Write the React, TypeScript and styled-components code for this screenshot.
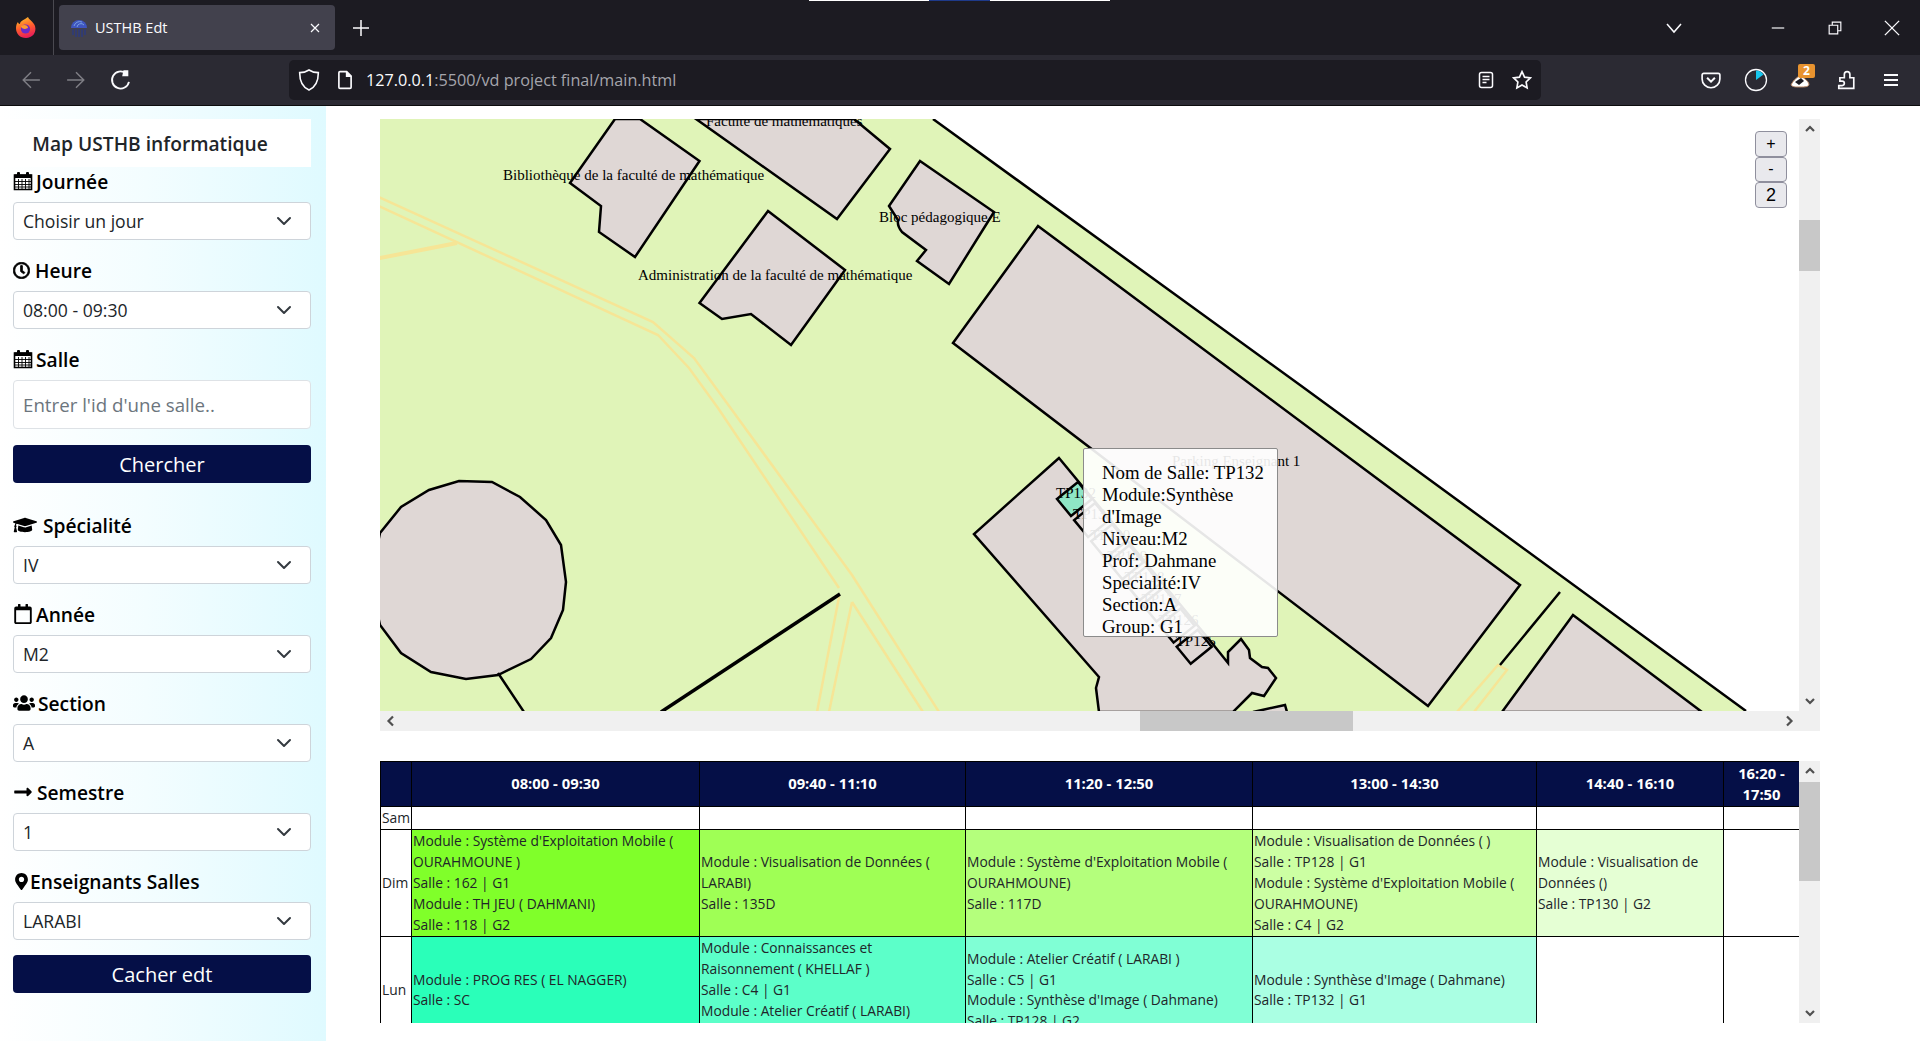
import type { ReactNode } from 'react';
import styled, { createGlobalStyle } from 'styled-components';
import {
  FaGraduationCap,
  FaLongArrowAltRight,
  FaMapMarkerAlt,
  FaRegCalendar,
  FaRegClock,
  FaUsers,
} from 'react-icons/fa';

const GlobalStyle = createGlobalStyle`
  html, body {
    margin: 0;
    padding: 0;
    height: 1041px;
    overflow: hidden;
    background: #fff;
    font-family: "Open Sans", sans-serif;
  }
  * { box-sizing: border-box; }
`;

/* ---- little drawings ---- */

function CalendarGrid() {
  return (
    <svg width="20" height="20" viewBox="0 0 20 20">
      <path d="M1.5 4h17v14.5h-17z" fill="#fff" stroke="#000" strokeWidth="1.6" />
      <path d="M1.5 3.5h17v3.5h-17z" fill="#000" />
      <path d="M5.5 8v10M9 8v10M12.5 8v10M16 8v10M2 10.5h16M2 13.5h16M2 16h16" stroke="#000" strokeWidth="0.9" />
      <rect x="4" y="1" width="3" height="5" rx="1" fill="#000" />
      <rect x="13" y="1" width="3" height="5" rx="1" fill="#000" />
    </svg>
  );
}

function FirefoxLogo() {
  return (
    <svg width="22" height="24" viewBox="0 0 22 24">
      <defs>
        <linearGradient id="fx" x1="0.3" y1="0" x2="0.6" y2="1">
          <stop offset="0" stopColor="#ffc02c" />
          <stop offset="0.5" stopColor="#ff5b2e" />
          <stop offset="1" stopColor="#e5185d" />
        </linearGradient>
      </defs>
      <path d="M13 1c1 3 5 4 7 9 2 7-3 12-9 12S1 18 1 12c0-3 1-5 2-6 0 1 1 2 2 2 0-3 4-4 8-7z" fill="url(#fx)" />
      <circle cx="10.5" cy="13" r="4.6" fill="#6a2bc9" />
      <path d="M6 10c3-2 7-1 7 2l-3 1c-2 0-4-1-4-3z" fill="#ff9a2e" />
    </svg>
  );
}

function Favicon() {
  return (
    <svg width="18" height="20" viewBox="0 0 18 20">
      <path d="M1 10a8 8 0 0 1 16 0z" fill="#3f55c0" />
      <path d="M3 11v6M6 11v8M9 11v8M12 11v8M15 11v6" stroke="#2c3a80" strokeWidth="1.4" />
      <path d="M4 8a6 6 0 0 1 8-4M7 9a4 4 0 0 1 7-2" stroke="#77a0e0" strokeWidth="1" fill="none" />
    </svg>
  );
}

const chromeStroke = { fill: 'none', stroke: '#fbfbfe', strokeWidth: 1.5 };

function Stroked({ size = 18, dim, children }: { size?: number; dim?: boolean; children: ReactNode }) {
  return (
    <svg width={size} height={size} viewBox="0 0 18 18" opacity={dim ? 0.4 : 1} {...chromeStroke}>
      {children}
    </svg>
  );
}

/* ---- map data, in page coordinates ---- */

const buildings = [
  'M615 119L570 183L601 206L599 232L635 257L699.5 161L640 119Z',
  'M696 119L837 219L890 149L854 119Z',
  'M920 161L994 212L949 284L917 261L926 250L902 232Q897 226 898 220L889 206Z',
  'M768 211L845 270L791 345L751 314L722 319L699.5 303Z',
  'M1038 226L1520 585L1428 706L953 343Z',
  'M1573 615L1502 712H1702Z',
  'M370 580L380 533L401 507L429 490L459 481L492 482L520 497L546 520L561 545L566 582L563 610L551 638L531 659L498 675L466 679L431 672L401 653L380 625Z',
  'M1059 458L974 534L1099 677L1096 688L1099 712H1233L1252 693L1264 696L1276 678L1268 668L1262 667L1250 658L1249 650L1241 639L1228 652L1228 663L1212 643Z',
];

const roads = [
  'M370 193L653 322L694 358L732 410L852 575L939 712',
  'M370 202L658 335L689 368L718 408L839 588',
  'M852 602L923 712M852 602L829 712M839 597L817 712',
  'M1457 712L1498 665L1507 670L1474 712',
];

const rooms = ['TP132', 'TP131', 'TP130', 'TP129', 'TP128', 'TP127', 'TP126', 'TP125'];

const mapLabels = [
  { text: 'Faculté de mathématiques', x: 706, y: 126 },
  { text: 'Bibliothèque de la faculté de mathématique', x: 503, y: 180 },
  { text: 'Bloc pédagogique E', x: 879, y: 222 },
  { text: 'Administration de la faculté de mathématique', x: 638, y: 280 },
  { text: 'Parking Enseignant 1', x: 1172, y: 466 },
];

function CampusMap() {
  return (
    <MapSvg viewBox="380 119 1419 592">
      <polygon points="370,119 933,119 1746,711 1746,712 370,712" fill="#e0f4b8" />
      {roads.map((d) => (
        <path key={d} d={d} fill="none" stroke="#f6e596" strokeWidth="2.5" />
      ))}
      <path d="M370 260L457 243" fill="none" stroke="#f6e596" strokeWidth="4" />
      <path d="M933 119L1300 385L1746 711" fill="none" stroke="#000" strokeWidth="2.5" />
      {buildings.map((d) => (
        <path key={d} d={d} fill="#dfd7d5" stroke="#000" strokeWidth="2.5" strokeLinejoin="miter" />
      ))}
      <path d="M1253 712L1285 705L1287 712" fill="#dfd7d5" stroke="#000" strokeWidth="2.5" />
      <path d="M498 673L524 712M1560 592L1500 665" fill="none" stroke="#000" strokeWidth="2.5" />
      <path d="M840 594L661 712" fill="none" stroke="#000" strokeWidth="3.5" />
      {rooms.map((name, i) => {
        const x = 1057 + i * 17.1;
        const y = 499 + i * 21.1;
        return (
          <g key={name}>
            <path
              d={`M${x} ${y}l21 -17l14 17l-21 17z`}
              fill={i === 0 ? '#8fe6c6' : '#dfd7d5'}
              stroke="#000"
              strokeWidth="2.5"
            />
            <MapLabel x={x - 1} y={y - 1}>{name}</MapLabel>
          </g>
        );
      })}
      {mapLabels.map((l) => (
        <MapLabel key={l.text} x={l.x} y={l.y}>{l.text}</MapLabel>
      ))}
    </MapSvg>
  );
}

/* ---- timetable data ---- */

const hours = ['08:00 - 09:30', '09:40 - 11:10', '11:20 - 12:50', '13:00 - 14:30', '14:40 - 16:10', '16:20 - 17:50'];
const colWidths = [31, 288, 266, 287, 284, 187, 76];

const days: { name: string; cells: { bg: string; lines: string[] }[] }[] = [
  { name: 'Sam', cells: [] },
  {
    name: 'Dim',
    cells: [
      { bg: '#80ff2a', lines: ["Module : Système d'Exploitation Mobile ( OURAHMOUNE )", 'Salle : 162 | G1', 'Module : TH JEU ( DAHMANI)', 'Salle : 118 | G2'] },
      { bg: '#9fff55', lines: ['Module : Visualisation de Données ( LARABI)', 'Salle : 135D'] },
      { bg: '#b4ff7c', lines: ["Module : Système d'Exploitation Mobile ( OURAHMOUNE)", 'Salle : 117D'] },
      { bg: '#ccffa3', lines: ['Module : Visualisation de Données ( )', 'Salle : TP128 | G1', "Module : Système d'Exploitation Mobile ( OURAHMOUNE)", 'Salle : C4 | G2'] },
      { bg: '#e5ffd4', lines: ['Module : Visualisation de Données ()', 'Salle : TP130 | G2'] },
    ],
  },
  {
    name: 'Lun',
    cells: [
      { bg: '#2affb9', lines: ['Module : PROG RES ( EL NAGGER)', 'Salle : SC'] },
      { bg: '#5cffc9', lines: ['Module : Connaissances et Raisonnement ( KHELLAF )', 'Salle : C4 | G1', 'Module : Atelier Créatif ( LARABI)', 'Salle : C5 | G2'] },
      { bg: '#80ffd5', lines: ['Module : Atelier Créatif ( LARABI )', 'Salle : C5 | G1', "Module : Synthèse d'Image ( Dahmane)", 'Salle : TP128 | G2'] },
      { bg: '#aaffe3', lines: ["Module : Synthèse d'Image ( Dahmane)", 'Salle : TP132 | G1'] },
    ],
  },
];

/* ---- sidebar data ---- */

const topFields = [
  { icon: <CalendarGrid />, label: 'Journée', value: 'Choisir un jour' },
  { icon: <FaRegClock size={17} stroke="currentColor" strokeWidth={24} />, label: 'Heure', value: '08:00 - 09:30', gap: 5 },
];

const bottomFields = [
  { icon: <FaGraduationCap size={24} />, label: 'Spécialité', value: 'IV', gap: 6 },
  { icon: <FaRegCalendar size={20} />, label: 'Année', value: 'M2' },
  { icon: <FaUsers size={22} />, label: 'Section', value: 'A' },
  { icon: <FaLongArrowAltRight size={20} />, label: 'Semestre', value: '1', gap: 4 },
  { icon: <FaMapMarkerAlt size={17} />, label: 'Enseignants Salles', value: 'LARABI', gap: 0 },
];

function Chevron() {
  return (
    <svg width="16" height="16" viewBox="0 0 16 16">
      <path d="M2 5l6 6 6-6" fill="none" stroke="#343a40" strokeWidth="2" strokeLinecap="round" strokeLinejoin="round" />
    </svg>
  );
}

function Field({ icon, label, value, gap }: { icon: ReactNode; label: string; value: string; gap?: number }) {
  return (
    <FieldBlock>
      <FieldLabel $gap={gap}>
        {icon}
        {label}
      </FieldLabel>
      <SelectBox>
        {value}
        <Chevron />
      </SelectBox>
    </FieldBlock>
  );
}

function Arrow({ dir }: { dir: 'up' | 'down' | 'left' | 'right' }) {
  const d = { up: 'M2 7l4-4 4 4', down: 'M2 4l4 4 4-4', left: 'M8 1.5L3.5 6 8 10.5', right: 'M4 1.5L8.5 6 4 10.5' }[dir];
  return (
    <svg width="12" height="12" viewBox="0 0 12 12">
      <path d={d} fill="none" stroke="#505050" strokeWidth="2.2" />
    </svg>
  );
}

export default function App() {
  return (
    <>
      <GlobalStyle />
      <Window>
        <TabBar>
          <LoadStrip />
          <LogoSlot>
            <FirefoxLogo />
          </LogoSlot>
          <Tab>
            <Favicon />
            <TabTitle>USTHB Edt</TabTitle>
            <Stroked size={12}>
              <path d="M3 3l12 12M15 3L3 15" strokeWidth="1.8" />
            </Stroked>
          </Tab>
          <NewTab>
            <Stroked size={18}>
              <path d="M9 1v16M1 9h16" />
            </Stroked>
          </NewTab>
          <TabSpacer />
          <ListTabs>
            <Stroked size={18}>
              <path d="M2 5l7 8 7-8" />
            </Stroked>
          </ListTabs>
          <WinButton>
            <Stroked size={14}>
              <path d="M1 9h16" />
            </Stroked>
          </WinButton>
          <WinButton>
            <Stroked size={14}>
              <path d="M1.5 5.5h11v11h-11zM5.5 5V1.5h11v11H13" />
            </Stroked>
          </WinButton>
          <WinButton>
            <Stroked size={16}>
              <path d="M1 1l16 16M17 1L1 17" />
            </Stroked>
          </WinButton>
        </TabBar>

        <NavBar>
          <NavButton>
            <Stroked size={20} dim>
              <path d="M17 9H2M9 2L2 9l7 7" strokeWidth="1.3" />
            </Stroked>
          </NavButton>
          <NavButton>
            <Stroked size={20} dim>
              <path d="M1 9h15M9 2l7 7-7 7" strokeWidth="1.3" />
            </Stroked>
          </NavButton>
          <NavButton>
            <Stroked size={22}>
              <path d="M15.5 10.5A7 7 0 1 1 13 3.5" />
              <path d="M11 1h4v5h-5z" fill="#fbfbfe" stroke="none" />
            </Stroked>
          </NavButton>
          <UrlBar>
            <UrlIcon>
              <Stroked size={24}>
                <path d="M9 1.5c2 1.3 4.5 2 7 2 0 6-1.5 10.5-7 13-5.500-2.500-7-7-7-13 2.500 0 5-.7 7-2z" strokeWidth="1.2" />
              </Stroked>
            </UrlIcon>
            <UrlIcon>
              <Stroked size={20}>
                <path d="M3.5 2.500a1 1 0 0 1 1-1h6l4 4v10a1 1 0 0 1-1 1h-9a1 1 0 0 1-1-1z" />
                <path d="M10.5 1.500v4h4" fill="#fbfbfe" />
              </Stroked>
            </UrlIcon>
            <UrlText>
              <b>127.0.0.1</b>:5500/vd project final/main.html
            </UrlText>
            <Stroked size={18}>
              <rect x="2.5" y="1.5" width="13" height="15" rx="2" />
              <path d="M5.5 5.5h7M5.5 8.5h7M5.5 11.5h4" />
            </Stroked>
            <UrlEndIcon>
              <Stroked size={20}>
                <path d="M9 1.500l2.300 4.900 5.200.7-3.800 3.700.9 5.300L9 13.500l-4.600 2.600.9-5.300L1.500 7.100l5.200-.7z" />
              </Stroked>
            </UrlEndIcon>
          </UrlBar>
          <Toolbar>
            <ToolSlot>
              <Stroked size={20}>
                <path d="M2.500 3h13a1.500 1.500 0 0 1 1.500 1.500V8a8 8 0 0 1-16 0V4.500A1.500 1.500 0 0 1 2.500 3z" />
                <path d="M5.500 7L9 10.500 12.500 7" strokeWidth="1.8" />
              </Stroked>
            </ToolSlot>
            <ToolSlot>
              <svg width="24" height="24" viewBox="0 0 24 24">
                <circle cx="12" cy="12" r="10.5" fill="none" stroke="#fbfbfe" strokeWidth="1.3" />
                <path d="M12 12V2.500a10 10 0 0 1 7.500 4z" fill="#16c6ee" />
              </svg>
            </ToolSlot>
            <ToolSlot>
              <svg width="24" height="24" viewBox="0 0 24 24">
                <path d="M2 17c3-6 6-7 9-10 3 3 8 5 9 9 0 3-4 3-9 3s-7 0-9-2z" fill="#fff" stroke="#b98563" strokeWidth="1" />
                <path d="M6 14l6-4 3 3-5 4z" fill="#1c1b22" />
              </svg>
              <ExtBadge>2</ExtBadge>
            </ToolSlot>
            <ToolSlot>
              <Stroked size={20}>
                <path d="M2.500 16.500h13.500V7h-3.500V4a2.500 2.500 0 0 0-5 0v3H3.500v3h2a2 2 0 0 1 0 4h-3z" />
              </Stroked>
            </ToolSlot>
            <ToolSlot>
              <Stroked size={18}>
                <path d="M2 4h14M2 9h14M2 14h14" strokeWidth="1.8" />
              </Stroked>
            </ToolSlot>
          </Toolbar>
        </NavBar>

        <Page>
          <Sidebar>
            <SideTitle>Map USTHB informatique</SideTitle>
            {topFields.map((f) => (
              <Field key={f.label} {...f} />
            ))}
            <FieldBlock>
              <FieldLabel>
                <CalendarGrid />
                Salle
              </FieldLabel>
              <SearchInput placeholder="Entrer l'id d'une salle.." />
            </FieldBlock>
            <PrimaryButton>Chercher</PrimaryButton>
            <FilterGroup>
              {bottomFields.map((f) => (
                <Field key={f.label} {...f} />
              ))}
            </FilterGroup>
            <PrimaryButton>Cacher edt</PrimaryButton>
          </Sidebar>

          <Main>
            <MapPanel>
              <MapRow>
                <MapViewport>
                  <CampusMap />
                  <ZoomControls>
                    <ZoomButton>+</ZoomButton>
                    <ZoomButton>-</ZoomButton>
                    <ZoomButton $large>2</ZoomButton>
                  </ZoomControls>
                  <RoomTooltip>
                    Nom de Salle: TP132
                    <br />
                    Module:Synthèse d'Image
                    <br />
                    Niveau:M2
                    <br />
                    Prof: Dahmane
                    <br />
                    Specialité:IV
                    <br />
                    Section:A
                    <br />
                    Group: G1
                  </RoomTooltip>
                </MapViewport>
                <VTrack>
                  <TrackArrow>
                    <Arrow dir="up" />
                  </TrackArrow>
                  <VThumb $top={80} $height={51} />
                  <TrackSpacer />
                  <TrackArrow>
                    <Arrow dir="down" />
                  </TrackArrow>
                </VTrack>
              </MapRow>
              <HTrack>
                <HArrow>
                  <Arrow dir="left" />
                </HArrow>
                <HThumb />
                <TrackSpacer />
                <HArrow>
                  <Arrow dir="right" />
                </HArrow>
                <TrackCorner />
              </HTrack>
            </MapPanel>

            <TablePanel>
              <TableClip>
                <Timetable>
                  <colgroup>
                    {colWidths.map((w, i) => (
                      <col key={i} style={{ width: w }} />
                    ))}
                  </colgroup>
                  <thead>
                    <tr>
                      <HeadCell />
                      {hours.map((h) => (
                        <HeadCell key={h}>{h}</HeadCell>
                      ))}
                    </tr>
                  </thead>
                  <tbody>
                    {days.map((day) => (
                      <tr key={day.name}>
                        <DayCell>{day.name}</DayCell>
                        {hours.map((h, i) => {
                          const cell = day.cells[i];
                          return (
                            <SlotCell key={h} $bg={cell?.bg}>
                              {cell?.lines.map((line) => (
                                <div key={line}>{line}</div>
                              ))}
                            </SlotCell>
                          );
                        })}
                      </tr>
                    ))}
                  </tbody>
                </Timetable>
              </TableClip>
              <VTrack>
                <TrackArrow>
                  <Arrow dir="up" />
                </TrackArrow>
                <VThumb $top={0} $height={99} />
                <TrackSpacer />
                <TrackArrow>
                  <Arrow dir="down" />
                </TrackArrow>
              </VTrack>
            </TablePanel>
          </Main>
        </Page>
      </Window>
    </>
  );
}

/* ---- browser chrome ---- */

const Window = styled.div`
  width: 1920px;
  height: 1041px;
  display: flex;
  flex-direction: column;
  overflow: hidden;
`;

const TabBar = styled.div`
  position: relative;
  flex: 0 0 55px;
  display: flex;
  align-items: center;
  background: #1c1b22;
`;

const LoadStrip = styled.div`
  position: absolute;
  top: 0;
  left: 809px;
  width: 301px;
  height: 1px;
  background: linear-gradient(90deg, #fff 0 40%, #1e3a8a 40% 60%, #fff 60%);
`;

const LogoSlot = styled.div`
  width: 54px;
  height: 55px;
  padding-right: 2px;
  display: flex;
  align-items: center;
  justify-content: center;
  border-right: 1px solid #4a4950;
`;

const Tab = styled.div`
  width: 276px;
  height: 45px;
  margin-left: 5px;
  padding: 0 14px 0 11px;
  display: flex;
  align-items: center;
  gap: 7px;
  border-radius: 4px;
  background: #42414d;
`;

const TabTitle = styled.span`
  flex: 1;
  color: #fbfbfe;
  font-size: 14.5px;
`;

const NewTab = styled.div`
  width: 52px;
  display: flex;
  justify-content: center;
`;

const TabSpacer = styled.div`
  flex: 1;
`;

const ListTabs = styled.div`
  width: 60px;
  margin-right: 45px;
  display: flex;
  justify-content: center;
`;

const WinButton = styled.div`
  width: 57px;
  display: flex;
  justify-content: center;
`;

const NavBar = styled.div`
  flex: 0 0 51px;
  display: flex;
  align-items: center;
  padding: 0 0 1px 8px;
  background: #2b2a33;
  border-bottom: 1px solid #0c0c0d;
`;

const NavButton = styled.div`
  width: 45px;
  display: flex;
  justify-content: center;
`;

const UrlBar = styled.div`
  width: 1252px;
  height: 40px;
  margin-left: 146px;
  padding: 0 9px 0 1px;
  display: flex;
  align-items: center;
  border-radius: 5px;
  background: #1c1b22;
`;

const UrlIcon = styled.div`
  width: 35px;
  display: flex;
  justify-content: center;
  margin-left: 1px;
`;

const UrlText = styled.div`
  flex: 1;
  margin-left: 4px;
  color: #a5a5ac;
  font-size: 16.2px;

  b {
    color: #fbfbfe;
    font-weight: 400;
  }
`;

const UrlEndIcon = styled.div`
  margin-left: 17px;
  display: flex;
`;

const Toolbar = styled.div`
  margin-left: 147px;
  display: flex;
  align-items: center;
`;

const ToolSlot = styled.div`
  position: relative;
  width: 45px;
  display: flex;
  align-items: center;
  justify-content: center;
`;

const ExtBadge = styled.span`
  position: absolute;
  top: -4px;
  left: 20px;
  width: 17px;
  height: 14px;
  border-radius: 2px;
  background: #e8932f;
  color: #fff;
  font-size: 12px;
  font-weight: 700;
  line-height: 14px;
  text-align: center;
`;

/* ---- sidebar ---- */

const Page = styled.div`
  flex: 1;
  min-height: 0;
  display: flex;
`;

const Sidebar = styled.aside`
  flex: 0 0 326px;
  padding: 13px 15px 0 13px;
  background: linear-gradient(90deg, #fff 0%, #f3fdff 45%, #dffaff 100%);
`;

const SideTitle = styled.div`
  height: 48px;
  margin-left: -13px;
  padding-right: 11px;
  display: flex;
  align-items: center;
  justify-content: center;
  background: #fff;
  color: #212529;
  font-size: 19.2px;
  font-weight: 600;
`;

const FieldBlock = styled.div`
  margin-bottom: 16px;
`;

const FieldLabel = styled.div<{ $gap?: number }>`
  height: 28px;
  margin-bottom: 7px;
  display: flex;
  align-items: center;
  gap: ${(p) => p.$gap ?? 3}px;
  color: #000;
  font-size: 19.2px;
  font-weight: 600;
`;

const SelectBox = styled.div`
  height: 38px;
  padding: 0 18px 0 9px;
  display: flex;
  align-items: center;
  justify-content: space-between;
  border: 1px solid #ced4da;
  border-radius: 4px;
  background: #fff;
  color: #212529;
  font-size: 17.6px;
`;

const SearchInput = styled.input`
  display: block;
  width: 100%;
  height: 49px;
  padding: 0 9px;
  border: 1px solid #dee2e6;
  border-radius: 4px;
  background: #fff;
  font-family: inherit;
  font-size: 18.7px;

  &::placeholder {
    color: #6c757d;
  }
`;

const PrimaryButton = styled.button`
  display: block;
  width: 100%;
  height: 38px;
  border: 0;
  border-radius: 4px;
  background: #050f47;
  color: #fff;
  font-family: inherit;
  font-size: 20px;
`;

const FilterGroup = styled.div`
  margin: 28px 0 -1px;
`;

/* ---- map ---- */

const Main = styled.main`
  flex: 1;
  min-width: 0;
  padding: 13px 100px 0 54px;
`;

const MapPanel = styled.section`
  height: 612px;
  display: flex;
  flex-direction: column;
`;

const MapRow = styled.div`
  height: 592px;
  display: flex;
`;

const MapViewport = styled.div`
  position: relative;
  flex: 1;
  min-width: 0;
  overflow: hidden;
`;

const MapSvg = styled.svg`
  display: block;
  width: 1419px;
  height: 592px;
`;

const MapLabel = styled.text`
  font-family: "Liberation Serif", serif;
  font-size: 15px;
  fill: #000;
`;

const ZoomControls = styled.div`
  position: absolute;
  top: 12px;
  right: 12px;
  width: 32px;
  display: flex;
  flex-direction: column;
`;

const ZoomButton = styled.button<{ $large?: boolean }>`
  height: ${(p) => (p.$large ? 26 : 25.5)}px;
  padding: 0;
  border: 1px solid #8f8f9d;
  border-radius: 4px;
  background: #e9e9ed;
  color: #000;
  font-family: "Liberation Sans", sans-serif;
  font-size: ${(p) => (p.$large ? 18 : 16)}px;
`;

const RoomTooltip = styled.div`
  position: absolute;
  left: 703px;
  top: 329px;
  width: 195px;
  height: 189px;
  padding: 13px 6px 0 18px;
  overflow: hidden;
  border: 1px solid #8b8b8b;
  border-radius: 2px;
  background: rgba(255, 255, 255, 0.9);
  color: #000;
  font-family: "Liberation Serif", serif;
  font-size: 18.8px;
  line-height: 22px;
`;

const VTrack = styled.div`
  flex: 0 0 21px;
  display: flex;
  flex-direction: column;
  background: #f0f0f0;
`;

const TrackArrow = styled.div`
  flex: 0 0 21px;
  display: flex;
  align-items: center;
  justify-content: center;
`;

const VThumb = styled.div<{ $top: number; $height: number }>`
  flex: 0 0 ${(p) => p.$height}px;
  margin-top: ${(p) => p.$top}px;
  background: #c8c8c8;
`;

const TrackSpacer = styled.div`
  flex: 1;
`;

const HTrack = styled.div`
  height: 20px;
  display: flex;
  background: #f0f0f0;
`;

const HArrow = styled.div`
  flex: 0 0 21px;
  display: flex;
  align-items: center;
  justify-content: center;
`;

const HThumb = styled.div`
  flex: 0 0 213px;
  margin-left: 739px;
  background: #c8c8c8;
`;

const TrackCorner = styled.div`
  flex: 0 0 21px;
`;

/* ---- timetable ---- */

const TablePanel = styled.section`
  height: 262px;
  margin-top: 30px;
  display: flex;
`;

const TableClip = styled.div`
  flex: 1;
  min-width: 0;
  overflow: hidden;
`;

const Timetable = styled.table`
  width: 1419px;
  table-layout: fixed;
  border-collapse: collapse;
  color: #212529;
  font-size: 13.8px;
  line-height: 20.8px;
`;

const HeadCell = styled.th`
  height: 44px;
  padding: 1px 2px;
  border: 1px solid #000;
  background: #050f47;
  color: #fff;
  font-size: 14.8px;
  font-weight: 700;
  text-align: center;
`;

const DayCell = styled.td`
  padding: 1px;
  border: 1px solid #000;
  background: #fff;
`;

const SlotCell = styled.td<{ $bg?: string }>`
  height: 23px;
  padding: 1px;
  border: 1px solid #000;
  background: ${(p) => p.$bg ?? '#fff'};
`;
